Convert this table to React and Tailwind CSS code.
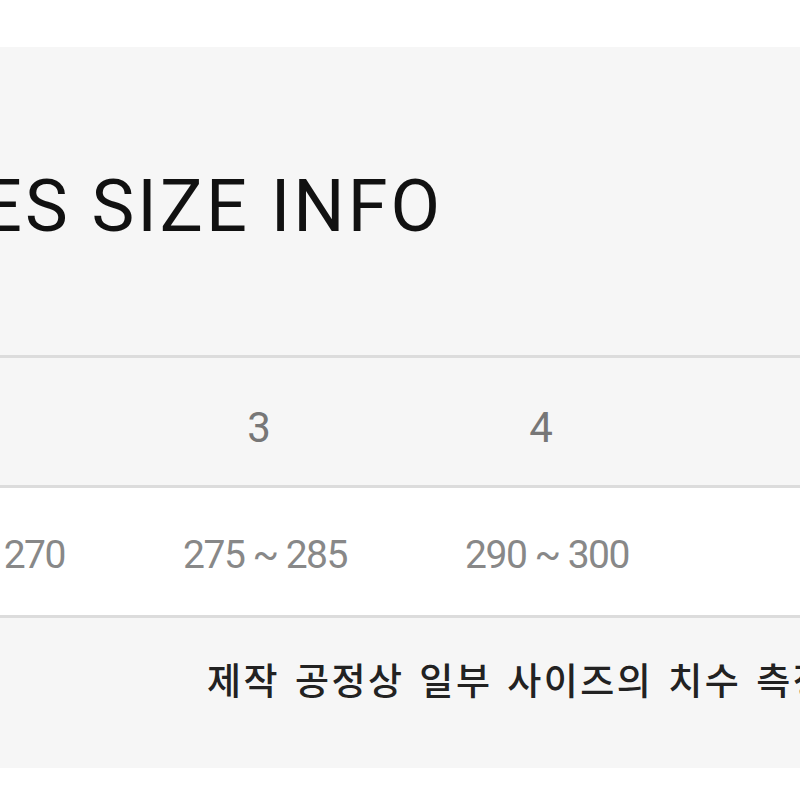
export default function App() {
  const heads = ["2", "3", "4"];
  const values = ["260 ~ 270", "275 ~ 285", "290 ~ 300"];
  return (
    <div className="w-[800px] h-[800px] overflow-hidden bg-white flex flex-col">
      <div className="h-[47px] shrink-0 bg-white" />
      <div className="h-[308px] shrink-0 bg-[#f6f6f6] pt-[124px] overflow-hidden">
        <div
          className="-ml-[19px] whitespace-nowrap text-[72px] leading-none tracking-[3px] text-[#111]"
          style={{ fontFamily: "Roboto, 'Liberation Sans', sans-serif" }}
        >
          ES SIZE INFO
        </div>
      </div>
      <div className="h-[3px] shrink-0 bg-[#dcdcdc]" />
      <div className="h-[127px] shrink-0 bg-[#f6f6f6] flex items-center pt-[12px] overflow-hidden">
        <div className="-ml-[164px] flex shrink-0">
          {heads.map((h) => (
            <div
              key={h}
              className="w-[282px] shrink-0 text-center text-[42px] leading-none text-[#777]"
              style={{ fontFamily: "Roboto, 'Liberation Sans', sans-serif" }}
            >
              {h}
            </div>
          ))}
        </div>
      </div>
      <div className="h-[3px] shrink-0 bg-[#dcdcdc]" />
      <div className="h-[127px] shrink-0 bg-white flex items-center pt-[8px] overflow-hidden">
        <div className="-ml-[158px] flex shrink-0">
          {values.map((v) => (
            <div
              key={v}
              className="w-[282px] shrink-0 text-center text-[39px] leading-none tracking-[-1.5px] text-[#888] whitespace-nowrap"
              style={{ fontFamily: "Roboto, 'Liberation Sans', sans-serif" }}
            >
              {v}
            </div>
          ))}
        </div>
      </div>
      <div className="h-[3px] shrink-0 bg-[#dcdcdc]" />
      <div className="h-[150px] shrink-0 bg-[#f6f6f6] pt-[43px] pl-[207px] overflow-hidden">
        <div
          className="whitespace-nowrap text-[37px] leading-none tracking-[2.5px] [word-spacing:4px] font-medium text-[#222]"
          style={{ fontFamily: "'Noto Sans CJK KR', 'Noto Sans', sans-serif" }}
        >
          제작 공정상 일부 사이즈의 치수 측정 오차가 발생할 수 있습니다.
        </div>
      </div>
      <div className="flex-1 bg-white" />
    </div>
  );
}
